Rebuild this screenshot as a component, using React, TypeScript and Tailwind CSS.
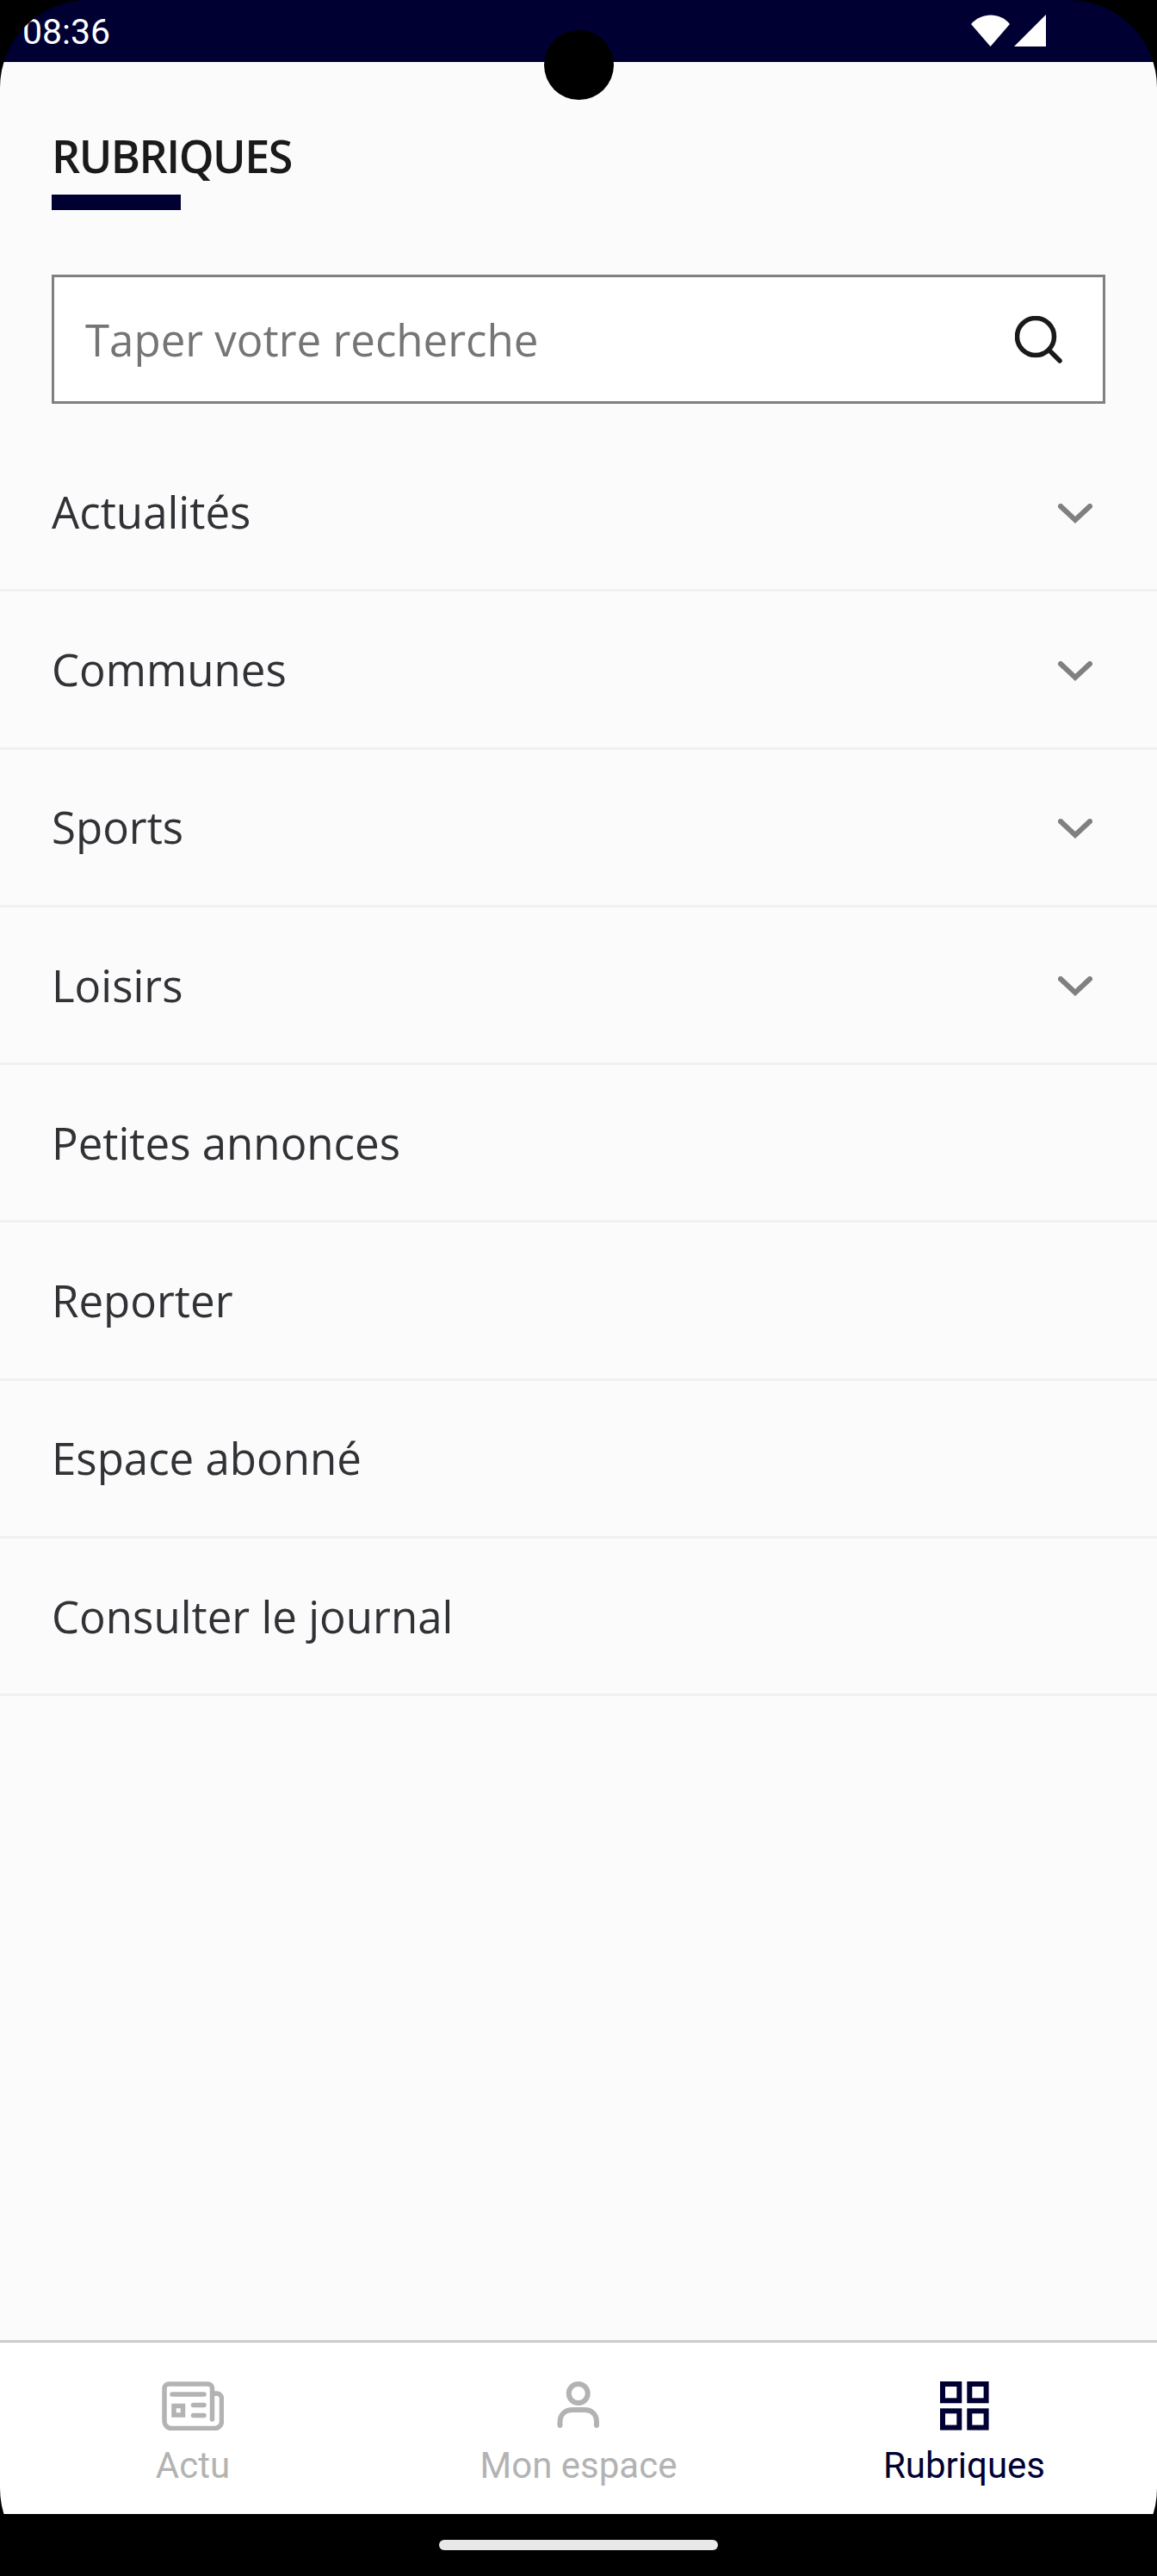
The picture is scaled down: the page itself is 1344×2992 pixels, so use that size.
const rows = [
  { label: "Actualités", chevron: true },
  { label: "Communes", chevron: true },
  { label: "Sports", chevron: true },
  { label: "Loisirs", chevron: true },
  { label: "Petites annonces", chevron: false },
  { label: "Reporter", chevron: false },
  { label: "Espace abonné", chevron: false },
  { label: "Consulter le journal", chevron: false },
];

function Row({ label, chevron }: { label: string; chevron: boolean }) {
  return (
    <div className="flex h-[183.27px] items-center justify-between border-b-[3px] border-[#f1f1f1] pl-[60px] pr-[75px]">
      <span className="font-['Open_Sans',sans-serif] text-[51px] text-[#303236]">{label}</span>
      {chevron && (
        <svg width="40" height="24" viewBox="0 0 40 24" fill="none" className="mt-[5px]">
          <path d="M3 3 L20 19 L37 3" stroke="#808080" strokeWidth="6" strokeLinecap="round" strokeLinejoin="miter" />
        </svg>
      )}
    </div>
  );
}

function NavItem({ label, active, children }: { label: string; active?: boolean; children: React.ReactNode }) {
  return (
    <div className="flex flex-1 flex-col items-center pt-[45px]">
      {children}
      <span className={`mt-[16px] font-['Roboto',sans-serif] text-[42px] leading-[50px] ${active ? "text-[#000033]" : "text-[#b3b3b3]"}`}>
        {label}
      </span>
    </div>
  );
}

export default function App() {
  return (
    <div className="h-[2992px] w-[1344px] overflow-hidden bg-black">
      <div className="relative flex h-full flex-col overflow-hidden rounded-[102px] bg-black">
        <div className="flex h-[72px] shrink-0 items-start justify-between bg-[#000033] pl-[26px] pr-[128px] pt-[14px]">
          <span className="font-['Roboto',sans-serif] text-[41px] leading-[47px] text-white">08:36</span>
          <div className="flex items-center gap-[4px] pt-[3px]">
            <svg width="46" height="38" viewBox="0 0 46 38">
              <path d="M0 11 C12 -3 34 -3 45 11 L22.500 37 Z" fill="#ffffff" />
            </svg>
            <svg width="38" height="38" viewBox="0 0 38 38">
              <path d="M37 0 V37 H0 Z" fill="#ffffff" />
            </svg>
          </div>
        </div>

        <div className="flex flex-1 flex-col bg-[#fbfbfb]">
          <div className="px-[60px] pt-[77px]">
            <h1 className="font-['Open_Sans',sans-serif] text-[52px] font-semibold leading-[64px] tracking-[-1.500px] text-[#1a1a1a]">RUBRIQUES</h1>
            <div className="mt-[13px] h-[18px] w-[150px] bg-[#000033]" />
            <div className="mt-[75px] flex h-[150px] items-center justify-between border-[3px] border-[#808080] bg-white pl-[36px] pr-[47px]">
              <span className="font-['Open_Sans',sans-serif] text-[51px] text-[#757575]">Taper votre recherche</span>
              <svg width="55" height="55" viewBox="0 0 55 55" fill="none">
                <circle cx="24" cy="24" r="21.500" stroke="#1a1a1a" strokeWidth="5.500" />
                <path d="M39.500 39.500 L52 52" stroke="#1a1a1a" strokeWidth="5.500" strokeLinecap="round" />
              </svg>
            </div>
          </div>
          <div className="mt-[35px]">
            {rows.map((r) => (
              <Row key={r.label} label={r.label} chevron={r.chevron} />
            ))}
          </div>
        </div>

        <div className="flex h-[202px] shrink-0 border-t-[3px] border-[#cccccc] bg-white">
          <NavItem label="Actu">
            <svg width="72" height="57" viewBox="0 0 72 57" fill="none" stroke="#b3b3b3" strokeWidth="5.500" strokeLinecap="round" strokeLinejoin="round">
              <path d="M58.500 44 V8 a5 5 0 0 0 -5 -5 H8 a5 5 0 0 0 -5 5 V46 a8 8 0 0 0 8 8.500 H61 a8 8 0 0 0 8.500 -8 V20 a6 6 0 0 0 -6 -6 H59" />
              <path d="M12 15 H49 M36.500 27.500 H49 M36.500 39.500 H49" />
              <rect x="14" y="28.500" width="10.500" height="10.500" strokeLinejoin="miter" />
            </svg>
          </NavItem>
          <NavItem label="Mon espace">
            <svg width="54" height="57" viewBox="0 0 54 57" fill="none" stroke="#b3b3b3" strokeWidth="6" strokeLinecap="round">
              <circle cx="26.750" cy="14" r="11" />
              <path d="M5.500 51 V47 C5.500 38 12 33 20 33 H34 C42 33 48 38 48 47 V51" />
            </svg>
          </NavItem>
          <NavItem label="Rubriques" active>
            <svg width="57" height="57" viewBox="0 0 57 57" fill="none" stroke="#000033" strokeWidth="6">
              <rect x="3" y="3" width="19.300" height="19.300" />
              <rect x="34.300" y="3" width="19.300" height="19.300" />
              <rect x="3" y="34.300" width="19.300" height="19.300" />
              <rect x="34.300" y="34.300" width="19.300" height="19.300" />
            </svg>
          </NavItem>
        </div>

        <div className="flex h-[72px] shrink-0 justify-center bg-black pt-[30px]">
          <div className="h-[12px] w-[324px] rounded-full bg-[#e8e8e8]" />
        </div>

        <div className="absolute left-[632px] top-[35px] h-[81px] w-[81px] rounded-full bg-black" />
      </div>
    </div>
  );
}
